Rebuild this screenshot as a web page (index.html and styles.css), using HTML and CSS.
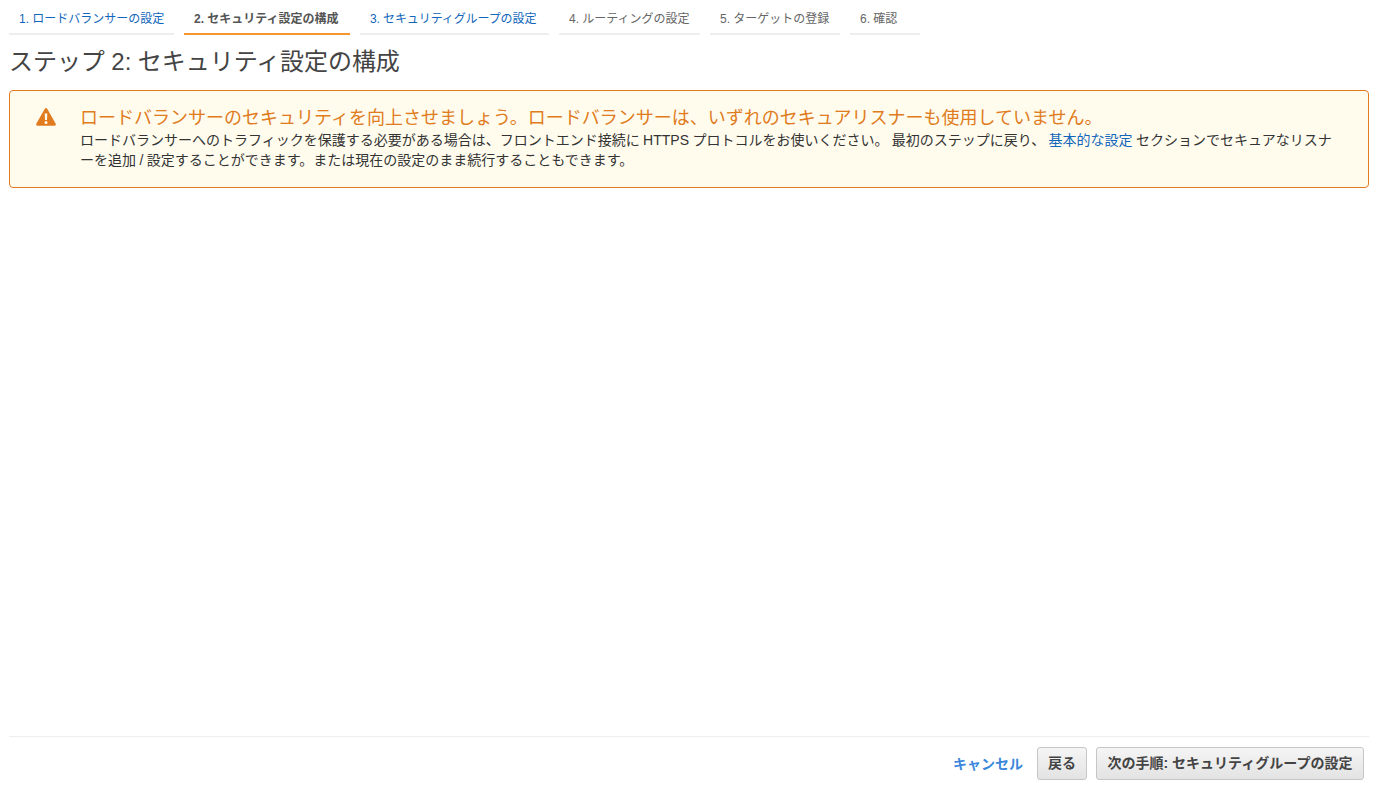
FILE: index.html
```html
<!DOCTYPE html>
<html lang="ja">
<head>
    <meta charset="UTF-8">
    <meta name="viewport" content="width=device-width, initial-scale=1.0">
    <title>ステップ 2: セキュリティ設定の構成</title>
    <link rel="stylesheet" href="styles.css">
</head>
<body>
    <div class="page">
        <nav class="steps">
            <a class="step step-link step-1">1. ロードバランサーの設定</a>
            <a class="step step-active step-2">2. セキュリティ設定の構成</a>
            <a class="step step-link step-3">3. セキュリティグループの設定</a>
            <a class="step step-4">4. ルーティングの設定</a>
            <a class="step step-5">5. ターゲットの登録</a>
            <a class="step step-6">6. 確認</a>
        </nav>
        <h1>ステップ 2: セキュリティ設定の構成</h1>
        <div class="alert">
            <svg class="alert-icon" width="20" height="18" viewBox="0 0 20 18">
                <path fill="#e07b20" fill-rule="evenodd" d="M10 0c.5 0 .9.3 1.2.7l8.500 15c.5.900-.1 2-1.200 2H1.500c-1.100 0-1.700-1.100-1.200-2l8.500-15C9.100.3 9.500 0 10 0zM8.700 5.500l.3 6.500h2l.3-6.500H8.700zM10 13a1.500 1.500 0 1 0 0 3 1.500 1.500 0 0 0 0-3z"/>
            </svg>
            <div class="alert-body">
                <div class="alert-title">ロードバランサーのセキュリティを向上させましょう。ロードバランサーは、いずれのセキュアリスナーも使用していません。</div>
                <p class="alert-text">ロードバランサーへのトラフィックを保護する必要がある場合は、フロントエンド接続に HTTPS プロトコルをお使いください。 最初のステップに戻り、 <a class="alert-link">基本的な設定</a> セクションでセキュアなリスナーを追加 / 設定することができます。または現在の設定のまま続行することもできます。</p>
            </div>
        </div>
        <div class="spacer"></div>
        <footer class="footer">
            <a class="cancel">キャンセル</a>
            <button class="btn btn-back">戻る</button>
            <button class="btn btn-next">次の手順: セキュリティグループの設定</button>
        </footer>
    </div>
</body>
</html>
```

FILE: styles.css
```css
* {
    box-sizing: border-box;
}

html, body {
    height: 100%;
}

body {
    margin: 0;
    background: #fff;
    color: #444;
    font-family: "Liberation Sans", "Noto Sans CJK JP", sans-serif;
    font-size: 14px;
    overflow: hidden;
}

.page {
    height: 792px;
    padding: 0 7px 0 9px;
    display: flex;
    flex-direction: column;
}

.steps {
    display: flex;
    gap: 10px;
    height: 35px;
}

.step {
    height: 35px;
    padding: 11px 10px 0;
    border-bottom: 2px solid #eee;
    color: #666;
    font-size: 12px;
    line-height: 16px;
    white-space: nowrap;
}

.step-1 { width: 165px; }
.step-2 { width: 166px; }
.step-3 { width: 189px; letter-spacing: -0.1px; }
.step-4 { width: 141px; }
.step-5 { width: 130px; }
.step-6 { width: 70px; }

.step-link {
    color: #1166bb;
}

.step-active {
    border-bottom-color: #f7962f;
    color: #555;
    font-weight: bold;
}

h1 {
    margin: 11px 0 13px;
    height: 31px;
    color: #444;
    font-size: 24px;
    font-weight: normal;
    line-height: 31px;
    letter-spacing: -0.06px;
}

.alert {
    display: flex;
    height: 98px;
    padding: 15px 32px 0 26px;
    border: 1px solid #e07b20;
    border-radius: 4px;
    background: #fffcee;
}

.alert-icon {
    flex: none;
    margin-top: 2px;
}

.alert-body {
    margin-left: 24px;
    min-width: 0;
}

.alert-title {
    color: #e07b20;
    font-size: 18px;
    line-height: 24px;
    white-space: nowrap;
}

.alert-text {
    margin: 0;
    color: #333;
    font-size: 14px;
    line-height: 20px;
    word-spacing: -0.5px;
}

.alert-link {
    color: #1166bb;
}

.spacer {
    flex: 1;
}

.footer {
    display: flex;
    align-items: center;
    justify-content: flex-end;
    height: 56px;
    padding: 10px 5px 12px 0;
    border-top: 1px solid #eee;
}

.cancel {
    margin-right: 5px;
    padding-bottom: 2px;
    color: #3a87dc;
    font-size: 14px;
    font-weight: bold;
}

.btn {
    height: 33px;
    margin-left: 9px;
    padding: 0 10px 3px;
    border: 1px solid #c6c6c6;
    border-radius: 3px;
    background: linear-gradient(to bottom, #f5f5f5, #e3e3e3);
    color: #444;
    font-family: inherit;
    font-size: 14px;
    font-weight: bold;
}

.btn-back {
    width: 50px;
}

.btn-next {
    width: 268px;
}
```
